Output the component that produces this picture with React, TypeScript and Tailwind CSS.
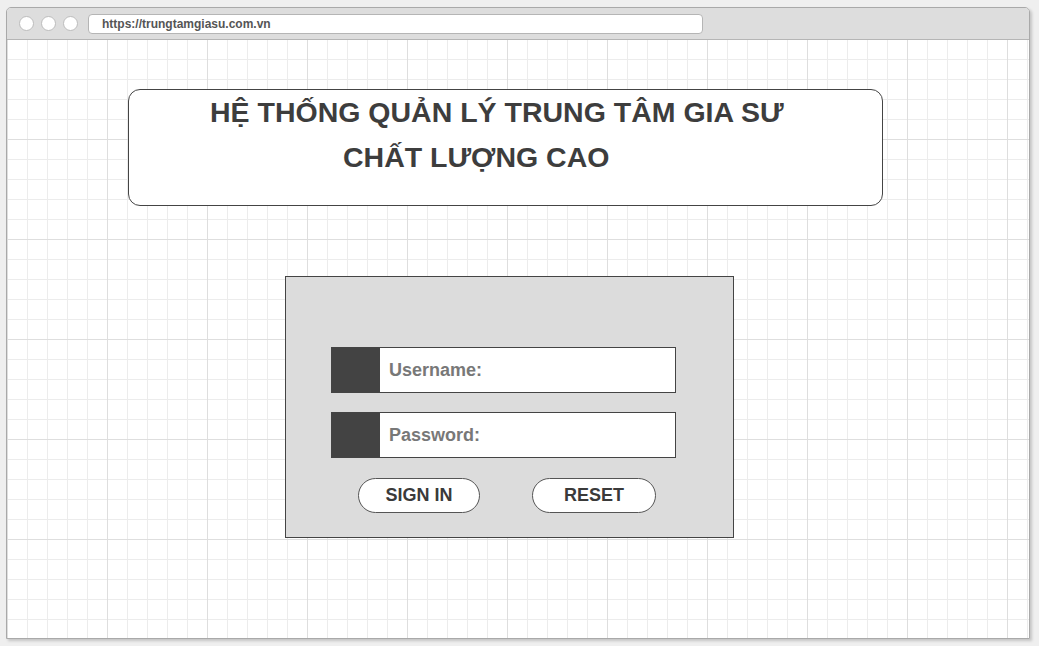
import React from "react";

const font = "font-['Liberation_Sans',Arial,sans-serif]";

const Field: React.FC<{ label: string }> = ({ label }) => (
  <div className="flex h-[46px] w-[345px] border border-[#444444] bg-white">
    <div className="w-[48px] bg-[#434343]" />
    <div className="flex items-center pl-[9px] text-[18px] font-bold text-[#787878]">{label}</div>
  </div>
);

export default function App() {
  return (
    <div className={`${font} h-[646px] w-[1039px] bg-[#efefef] pl-[6px] pt-[7px]`}>
      <div className="flex h-[632px] w-[1024px] flex-col overflow-hidden rounded-t-[5px] border border-[#a9a9a9] shadow-[2px_2px_3px_rgba(0,0,0,0.18)]">
        {/* browser bar */}
        <div className="flex h-[32px] items-center border-b border-[#b5b5b5] bg-[#dddddd] pl-[12px]">
          <div className="h-[15px] w-[15px] rounded-full border border-[#bcbcbc] bg-white" />
          <div className="ml-[7px] h-[15px] w-[15px] rounded-full border border-[#bcbcbc] bg-white" />
          <div className="ml-[7px] h-[15px] w-[15px] rounded-full border border-[#bcbcbc] bg-white" />
          <div className="ml-[10px] flex h-[20px] w-[615px] items-center rounded-[4px] border border-[#b5b5b5] bg-white pl-[13px] text-[12px] font-bold text-[#555555]">
            https://trungtamgiasu.com.vn
          </div>
        </div>

        {/* page */}
        <div className="flex-1 bg-white bg-[linear-gradient(to_right,#dedede_1px,transparent_1px),linear-gradient(to_bottom,#dedede_1px,transparent_1px),linear-gradient(to_right,#ececec_1px,transparent_1px),linear-gradient(to_bottom,#ececec_1px,transparent_1px)] bg-[size:100px_100px,100px_100px,20px_20px,20px_20px] bg-[position:0_-1px]">
          <div className="ml-[121px] mt-[49px] flex h-[117px] w-[755px] flex-col rounded-[12px] border border-[#444444] bg-white text-[28.5px] font-bold leading-[45px] text-[#3d3d3d]">
            <div className="pl-[81px]">HỆ THỐNG QUẢN LÝ TRUNG TÂM GIA SƯ</div>
            <div className="pl-[214px]">CHẤT LƯỢNG CAO</div>
          </div>

          <div className="ml-[278px] mt-[70px] flex h-[262px] w-[449px] flex-col border border-[#444444] bg-[#dcdcdc] pl-[45px] pt-[70px]">
            <Field label="Username:" />
            <div className="mt-[19px]">
              <Field label="Password:" />
            </div>
            <div className="mt-[20px] flex pl-[27px]">
              <button className="h-[35px] w-[122px] rounded-full border border-[#555555] bg-white text-[18px] font-bold text-[#3a3a3a]">
                SIGN IN
              </button>
              <button className="ml-[52px] h-[35px] w-[124px] rounded-full border border-[#555555] bg-white text-[18px] font-bold text-[#3a3a3a]">
                RESET
              </button>
            </div>
          </div>
        </div>
      </div>
    </div>
  );
}
